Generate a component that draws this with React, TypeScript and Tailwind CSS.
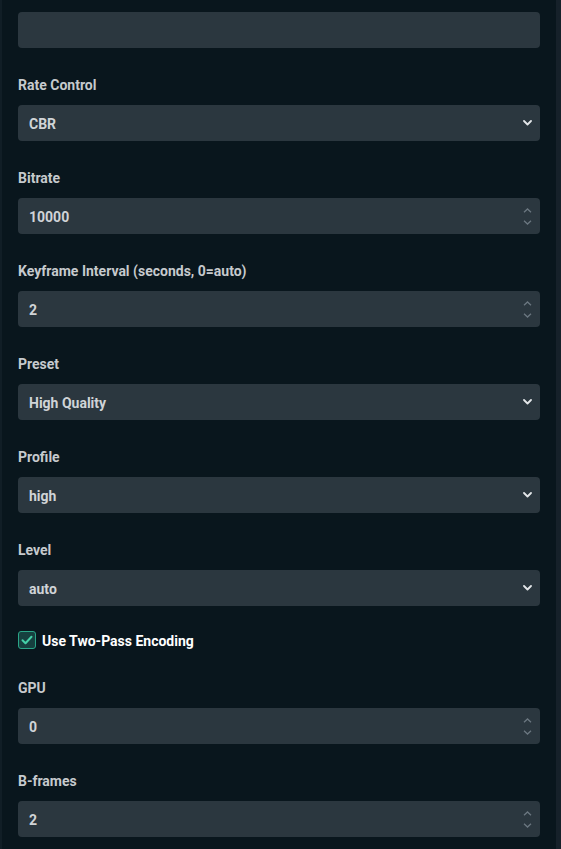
import type { ReactNode } from 'react'

const font = { fontFamily: 'Roboto, "Liberation Sans", sans-serif' }

const ChevronDown = () => (
  <svg width="9" height="6" viewBox="0 0 9 6" fill="none">
    <path d="M1 1l3.5 3.5L8 1" stroke="#e3e6e9" strokeWidth="1.8" strokeLinecap="round" strokeLinejoin="round" />
  </svg>
)

const Spinner = () => (
  <div className="flex flex-col items-center gap-[7px]">
    <svg width="9" height="5" viewBox="0 0 9 5" fill="none">
      <path d="M1 4.2L4.5 1 8 4.2" stroke="#6b7780" strokeWidth="1.3" />
    </svg>
    <svg width="9" height="5" viewBox="0 0 9 5" fill="none">
      <path d="M1 0.8L4.5 4 8 0.8" stroke="#6b7780" strokeWidth="1.3" />
    </svg>
  </div>
)

function Field({ label, children, gap = 'mt-[27px]' }: { label: string; children: ReactNode; gap?: string }) {
  return (
    <div className={gap}>
      <div className="h-5 leading-5 text-[14px] font-bold text-[#c6cacd] mb-[10px]">{label}</div>
      {children}
    </div>
  )
}

function Box({ value, kind }: { value?: string; kind?: 'select' | 'number' }) {
  return (
    <div className="h-9 rounded-[4px] bg-[#2b373f] flex items-center justify-between pl-[11px] pr-[8px]">
      <span className="text-[14px] font-bold text-[#d0d4d7] translate-y-[1px]">{value}</span>
      {kind === 'select' && <ChevronDown />}
      {kind === 'number' && <Spinner />}
    </div>
  )
}

export default function App() {
  return (
    <div className="w-[561px] h-[849px] bg-[#09161d] flex overflow-hidden" style={font}>
      <div className="w-[2px] bg-[#111e26]" />
      <div className="flex-1 px-4 pt-3">
        <Box />
        <Field label="Rate Control"><Box value="CBR" kind="select" /></Field>
        <Field label="Bitrate"><Box value="10000" kind="number" /></Field>
        <Field label="Keyframe Interval (seconds, 0=auto)"><Box value="2" kind="number" /></Field>
        <Field label="Preset"><Box value="High Quality" kind="select" /></Field>
        <Field label="Profile"><Box value="high" kind="select" /></Field>
        <Field label="Level"><Box value="auto" kind="select" /></Field>

        <div className="mt-[25px] h-[18px] flex items-center gap-[6px]">
          <div className="w-[18px] h-[18px] rounded-[3px] bg-[#16403f] border border-[#2aa588] flex items-center justify-center">
            <svg width="12" height="10" viewBox="0 0 12 10" fill="none">
              <path d="M1.5 5.2l3 3L10.5 1.8" stroke="#45d0a8" strokeWidth="2" strokeLinecap="round" strokeLinejoin="round" />
            </svg>
          </div>
          <span className="text-[14px] font-bold text-white translate-y-[1px]">Use Two-Pass Encoding</span>
        </div>

        <Field label="GPU" gap="mt-[29px]"><Box value="0" kind="number" /></Field>
        <Field label="B-frames"><Box value="2" kind="number" /></Field>
      </div>
      <div className="w-[5px] bg-[#16212a]" />
    </div>
  )
}
